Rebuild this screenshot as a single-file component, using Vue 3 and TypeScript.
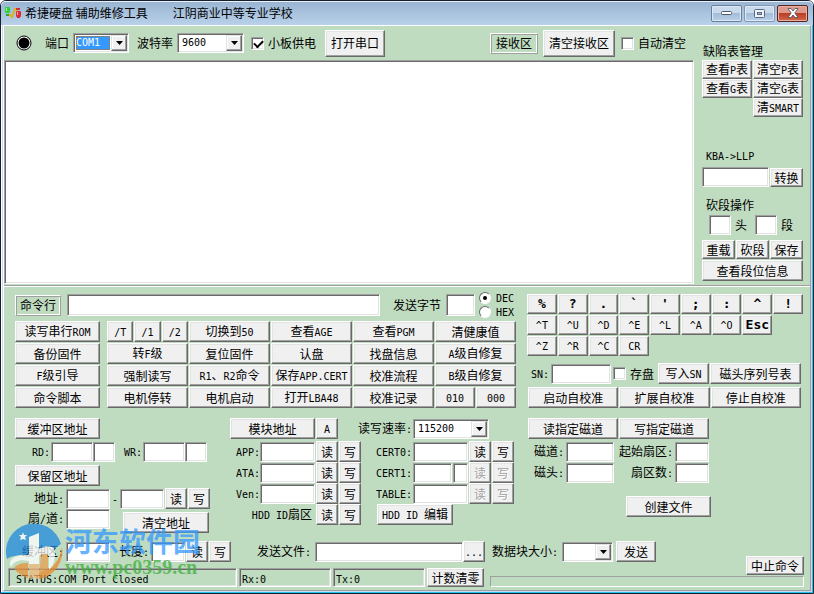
<script setup lang="ts">
import { h, reactive, ref } from 'vue'

// Text run helper: Latin characters are set in a narrow monospace face, half the width of a CJK glyph.
const T = (props: { s: string }) =>
  h('span', { class: 'txt' }, props.s.split(/([\x20-\x7e]+)/).filter(Boolean).map((part) =>
    /^[\x20-\x7e]/.test(part) ? h('span', { class: 'latin' }, part) : part
  ))
T.props = ['s']

const port = ref('COM1')
const baud = ref('9600')
const rate = ref('115200')
const blockSize = ref('')
const boardPower = ref(true)
const autoClear = ref(false)
const saveDisk = ref(false)
const numberBase = ref('DEC')
const received = ref('')

const f = reactive<Record<string, string>>({})

const commandRows: string[][] = [
  ['切换到50', '查看AGE', '查看PGM', '清健康值'],
  ['备份固件', '转F级', '复位固件', '认盘', '找盘信息', 'A级自修复'],
  ['F级引导', '强制读写', 'R1、R2命令', '保存APP.CERT', '校准流程', 'B级自修复'],
  ['命令脚本', '电机停转', '电机启动', '打开LBA48', '校准记录'],
]
const symbolKeys = ['%', '?', '.', '`', "'", ';', ':', '^', '!']
const controlKeys = ['^T', '^U', '^D', '^E', '^L', '^A', '^O']
const lastKeys = ['^Z', '^R', '^C', 'CR']
const modules = ['APP', 'ATA', 'Ven']
const certs = [
  { name: 'CERT0', split: false, off: false },
  { name: 'CERT1', split: true, off: true },
  { name: 'TABLE', split: false, off: true },
]
</script>

<template>
  <div class="window">
    <header class="titlebar">
      <svg class="app-icon" width="17" height="14" viewBox="0 0 17 14" aria-hidden="true">
        <path d="M4 8 L7 11 L10 3 L13 4" fill="none" stroke="#e0b020" stroke-width="2" />
        <rect x="0" y="1" width="5" height="6" rx="1" fill="#2fd23a" />
        <path d="M1 8h3v2H1z" fill="#2fa23a" />
        <rect x="11" y="5" width="5" height="6" rx="1" fill="#e02a34" />
        <path d="M11 2h4v2h-4zM12 11h3v1h-3z" fill="#c8323a" />
        <path d="M1 2h1v3H1zM12 6h1v3h-1z" fill="#fff" opacity=".6" />
      </svg>
      <h1>希捷硬盘 辅助维修工具</h1>
      <span class="school">江阴商业中等专业学校</span>
      <div class="caption">
        <button class="cap" aria-label="最小化">
          <svg width="12" height="5" viewBox="0 0 12 5"><rect x=".5" y=".5" width="10" height="3" rx="1" fill="#fff" stroke="#4d586b" /></svg>
        </button>
        <button class="cap dim" aria-label="最大化">
          <svg width="11" height="9" viewBox="0 0 11 9"><rect x=".5" y=".5" width="10" height="8" rx="1" fill="#eef3f9" stroke="#5a6880" /><rect x="3.5" y="3.5" width="4" height="2" fill="#9fb8d4" stroke="#5a6880" /></svg>
        </button>
        <button class="cap close" aria-label="关闭">
          <svg width="12" height="10" viewBox="0 0 12 10"><path d="M1 .5h3l2 2.500 2-2.500h3L7.800 5 11 9.500H8L6 7 4 9.500H1L4.200 5z" fill="#fff" stroke="#4a4a58" stroke-width=".8" /></svg>
        </button>
      </div>
    </header>

    <main class="client">
      <section class="upper">
        <div class="receive">
          <div class="toolbar">
            <svg class="lamp" width="17" height="17" viewBox="0 0 17 17" aria-hidden="true">
              <circle cx="8" cy="8" r="7" fill="#fff" stroke="#000" /><circle cx="8" cy="8" r="5.500" />
            </svg>
            <label for="port">端口</label>
            <span class="combo port">
              <select id="port" v-model="port"><option>COM1</option><option>COM2</option></select>
              <i><svg width="7" height="4" viewBox="0 0 7 4"><path d="M0 0h7L3.500 4z" /></svg></i>
            </span>
            <label for="baud">波特率</label>
            <span class="combo baud">
              <select id="baud" v-model="baud"><option>9600</option><option>115200</option></select>
              <i><svg width="7" height="4" viewBox="0 0 7 4"><path d="M0 0h7L3.500 4z" /></svg></i>
            </span>
            <label class="check power"><input v-model="boardPower" type="checkbox" />小板供电</label>
            <button class="tall">打开串口</button>
            <span class="plate area">接收区</span>
            <button class="tall">清空接收区</button>
            <label class="check"><input v-model="autoClear" type="checkbox" />自动清空</label>
          </div>
          <textarea v-model="received" aria-label="接收区"></textarea>
        </div>

        <aside class="side">
          <div class="side-title">缺陷表管理</div>
          <div class="defects">
            <button><T s="查看P表" /></button><button><T s="清空P表" /></button>
            <button><T s="查看G表" /></button><button><T s="清空G表" /></button>
            <button class="smart"><T s="清SMART" /></button>
          </div>
          <label class="side-label kba" for="kba"><T s="KBA->LLP" /></label>
          <div class="convert"><input id="kba" v-model="f.kba" type="text" /><button>转换</button></div>
          <div class="side-label cut">砍段操作</div>
          <div class="heads">
            <label><input v-model="f.head" type="text" />头</label>
            <label><input v-model="f.seg" type="text" />段</label>
          </div>
          <div class="triple"><button>重载</button><button>砍段</button><button>保存</button></div>
          <button class="info">查看段位信息</button>
        </aside>
      </section>

      <section class="lower">
        <div class="band">
          <div class="commands">
            <div class="cmdline">
              <label class="plate" for="cmd">命令行</label>
              <input id="cmd" v-model="f.cmd" class="grow" type="text" />
              <label class="send-label" for="byte">发送字节</label>
              <input id="byte" v-model="f.byte" class="byte" type="text" />
              <div class="bases">
                <label><input v-model="numberBase" type="radio" value="DEC" /><T s="DEC" /></label>
                <label><input v-model="numberBase" type="radio" value="HEX" /><T s="HEX" /></label>
              </div>
            </div>
            <div class="cmdgrid">
              <button class="first"><T s="读写串行ROM" /></button>
              <div class="thirds">
                <button v-for="k in ['/T', '/1', '/2']" :key="k"><T :s="k" /></button>
              </div>
              <template v-for="(row, r) in commandRows" :key="r">
                <button v-for="(c, i) in row" :key="c" :class="{ first: r > 0 && i === 0 }"><T :s="c" /></button>
              </template>
              <div class="halves"><button><T s="010" /></button><button><T s="000" /></button></div>
            </div>
          </div>

          <div class="right">
            <div class="keys">
              <button v-for="k in symbolKeys" :key="k" class="bold">{{ k }}</button>
              <button v-for="k in controlKeys" :key="k"><T :s="k" /></button>
              <button class="bold esc">Esc</button>
              <button v-for="(k, i) in lastKeys" :key="k" :class="{ wrap: i === 0 }"><T :s="k" /></button>
            </div>
            <div class="sn">
              <label for="sn"><T s="SN:" /></label>
              <input id="sn" v-model="f.sn" type="text" />
              <label class="check"><input v-model="saveDisk" type="checkbox" />存盘</label>
              <button><T s="写入SN" /></button>
              <button class="serial">磁头序列号表</button>
            </div>
            <div class="calib"><button>启动自校准</button><button>扩展自校准</button><button>停止自校准</button></div>
          </div>
        </div>

        <div class="band second">
          <div class="buffers">
            <button class="wide">缓冲区地址</button>
            <div class="row pairs">
              <label class="rd" for="rd"><T s="RD:" /></label>
              <input id="rd" v-model="f.rd" class="w42" type="text" /><input v-model="f.rd2" class="w22" type="text" aria-label="RD 2" />
              <label class="wr" for="wr"><T s="WR:" /></label>
              <input id="wr" v-model="f.wr" class="w42" type="text" /><input v-model="f.wr2" class="w22" type="text" aria-label="WR 2" />
            </div>
            <button class="wide keep">保留区地址</button>
            <div class="row addr">
              <label class="lead" for="from"><T s="地址:" /></label>
              <input id="from" v-model="f.from" class="w44" type="text" />
              <span class="dash"><T s="-" /></span>
              <input v-model="f.to" class="w44" type="text" aria-label="结束地址" />
              <button class="rw">读</button><button class="rw">写</button>
            </div>
            <div class="row sector">
              <label class="lead" for="sector"><T s="扇/道:" /></label>
              <input id="sector" v-model="f.sector" class="w44" type="text" />
              <button class="wipe">清空地址</button>
            </div>
          </div>

          <div class="modules">
            <div class="row head"><button class="wide">模块地址</button><button class="rw"><T s="A" /></button></div>
            <div v-for="m in modules" :key="m" class="row">
              <label :for="m"><T :s="m + ':'" /></label>
              <input :id="m" v-model="f[m]" class="w55" type="text" />
              <button class="rw">读</button><button class="rw">写</button>
            </div>
            <div class="row hdd"><T s="HDD ID扇区" /><button class="rw">读</button><button class="rw">写</button></div>
          </div>

          <div class="certs">
            <div class="row head">
              <label class="rate" for="rate"><T s="读写速率:" /></label>
              <span class="combo speed">
                <select id="rate" v-model="rate"><option>115200</option><option>9600</option></select>
                <i><svg width="7" height="4" viewBox="0 0 7 4"><path d="M0 0h7L3.500 4z" /></svg></i>
              </span>
            </div>
            <div v-for="c in certs" :key="c.name" class="row cert">
              <label :for="c.name"><T :s="c.name + ':'" /></label>
              <span class="fields">
                <input :id="c.name" v-model="f[c.name]" type="text" />
                <input v-if="c.split" v-model="f.extra" class="tiny" type="text" aria-label="CERT1 2" />
              </span>
              <button class="rw" :disabled="c.off">读</button><button class="rw" :disabled="c.off">写</button>
            </div>
            <button class="edit"><T s="HDD ID 编辑" /></button>
          </div>

          <div class="tracks">
            <div class="row head"><button>读指定磁道</button><button>写指定磁道</button></div>
            <div class="row">
              <label class="a" for="track"><T s="磁道:" /></label><input id="track" v-model="f.track" class="w48" type="text" />
              <label class="b" for="start"><T s="起始扇区:" /></label><input id="start" v-model="f.start" class="w34" type="text" />
            </div>
            <div class="row">
              <label class="a" for="hd"><T s="磁头:" /></label><input id="hd" v-model="f.hd" class="w48" type="text" />
              <label class="b" for="count"><T s="扇区数:" /></label><input id="count" v-model="f.count" class="w34" type="text" />
            </div>
            <button class="create">创建文件</button>
          </div>
        </div>

        <div class="transfer">
          <div class="row buffer">
            <label class="lead" for="buf"><T s="缓冲区:" /></label>
            <input id="buf" v-model="f.buf" class="w44" type="text" />
            <label class="len" for="len"><T s="长度:" /></label>
            <input id="len" v-model="f.len" class="w34" type="text" />
            <button class="rw">读</button><button class="rw">写</button>
          </div>
          <div class="row file">
            <label for="file"><T s="发送文件:" /></label>
            <input id="file" v-model="f.file" type="text" />
            <button class="rw browse" aria-label="浏览"><T s="..." /></button>
            <label for="block"><T s="数据块大小:" /></label>
            <span class="combo block">
              <select id="block" v-model="blockSize"><option value=""></option><option>512</option></select>
              <i><svg width="7" height="4" viewBox="0 0 7 4"><path d="M0 0h7L3.500 4z" /></svg></i>
            </span>
            <button class="go">发送</button>
          </div>
          <button class="abort">中止命令</button>
        </div>

        <footer class="status">
          <div class="pane message"><T s="STATUS:COM Port Closed" /></div>
          <div class="pane"><T s="Rx:0" /></div>
          <div class="pane"><T s="Tx:0" /></div>
          <button class="reset">计数清零</button>
          <div class="progress" role="progressbar" aria-valuenow="0"></div>
        </footer>
      </section>
    </main>

    <div class="watermark">
      <svg width="58" height="58" viewBox="0 0 58 58" aria-hidden="true">
        <path d="M2 37A28 28 0 0 1 56 22L49 27C45 24 39 25 33 29L20 33C12 33 6 34 2 37Z" fill="#1f88dc" />
        <path d="M57 25A28 28 0 0 1 34 57V50L47 45C53 39 56 32 57 25Z" fill="#e8892c" />
        <path d="M36 33C39 30 43 31 43 35V47L34 51Z" fill="#e8a050" />
        <path d="M9 46C12 42 17 41 23 41V56C17 54 12 51 9 46Z" fill="#e89038" />
        <path d="M24 15L34 11V27C41 23 50 23 50 31C50 38 48 44 44 48V35C43 31 38 31 34 34V57L24 56V39C15 37 9 39 6 45C2 38 10 32 24 33Z" fill="#fff" />
        <path d="M24 42H34V57L24 56Z" fill="#f0b878" />
        <path d="M18 10l1 3 3 0-2 2 1 3-3-1-3 1 1-3-2-2 3 0z" fill="#fff" />
      </svg>
      <div class="mark-text"><span class="mark-name">河东软件园</span><span class="mark-url">www.pc0359.cn</span></div>
    </div>
  </div>
</template>

<style>
body { margin: 0; }
</style>

<style scoped>
.window, .window * { box-sizing: border-box; }
.window {
  position: relative;
  display: flex;
  flex-direction: column;
  min-height: 100vh;
  padding: 0 2px 2px;
  border: 1px solid #16202c;
  border-radius: 6px 6px 0 0;
  background: #c6dcf2;
  box-shadow: inset -1px -1px #22c3f0, inset 1px 1px #fff;
  font: 12px/14px "Noto Sans CJK SC", sans-serif;
  color: #000;
  white-space: nowrap;
}
:deep(.txt) { white-space: pre; }
:deep(.latin) { font-family: "DejaVu Sans Mono", monospace; font-size: 10px; }

.titlebar {
  display: flex;
  align-items: center;
  height: 24px;
  margin: 0 -2px;
  padding: 0 5px 0 4px;
  border-radius: 5px 5px 0 0;
  background: linear-gradient(#99b4d1, #b9d1ea);
  box-shadow: inset 0 1px #e8f1fa;
}
.app-icon { margin-right: 3px; }
h1 { margin: 0; font-size: 12px; font-weight: 400; }
.school { margin-left: 25px; }
.caption { display: flex; gap: 2px; margin-left: auto; }

button {
  height: 21px;
  margin: 0;
  padding: 0;
  border: 1px solid;
  border-color: #fff #696969 #696969 #fff;
  background: #f0f0f0;
  box-shadow: inset -1px -1px #a0a0a0, inset 1px 1px #e3e3e3;
  font: inherit;
  color: #000;
  text-align: center;
  white-space: nowrap;
  flex: none;
}
button:disabled { color: #a0a0a0; text-shadow: 1px 1px #fff; }
.cap {
  display: flex;
  align-items: center;
  justify-content: center;
  width: 31px;
  height: 17px;
  border: 1px solid #6b7f99;
  border-radius: 2px;
  background: linear-gradient(#c9daec 45%, #a5bdd8 50%, #b9d0e8);
  box-shadow: inset 0 0 0 1px #dce9f6;
}
.cap.dim { border-color: #8397b3; }
.cap.close {
  border-color: #5b2320;
  background: linear-gradient(#dc9a8c 45%, #bd3c24 50%, #d0694a);
  box-shadow: inset 0 0 0 1px #e8b0a2;
}

input[type="text"], textarea {
  display: block;
  min-width: 0;
  height: 20px;
  margin: 0;
  padding: 1px 2px;
  border: 1px solid;
  border-color: #a0a0a0 #fff #fff #a0a0a0;
  border-radius: 0;
  outline: none;
  background: #fff;
  box-shadow: inset 1px 1px #696969, inset -1px -1px #e3e3e3;
  font: inherit;
  flex: none;
}
.combo {
  position: relative;
  display: flex;
  height: 20px;
  padding: 2px;
  border: 1px solid;
  border-color: #a0a0a0 #fff #fff #a0a0a0;
  background: #fff;
  box-shadow: inset 1px 1px #696969, inset -1px -1px #e3e3e3;
  flex: none;
}
.combo select {
  appearance: none;
  flex: 1;
  min-width: 0;
  margin: 0;
  padding: 0 2px;
  border: 0;
  border-radius: 0;
  outline: none;
  background: #fff;
  font: 10px/14px "DejaVu Sans Mono", monospace;
  color: #000;
}
.combo i {
  display: flex;
  align-items: center;
  justify-content: center;
  width: 16px;
  margin: -1px -1px -1px 0;
  border: 1px solid;
  border-color: #e3e3e3 #696969 #696969 #e3e3e3;
  background: #f0f0f0;
  box-shadow: inset -1px -1px #a0a0a0, inset 1px 1px #fff;
  pointer-events: none;
}
.combo.port select {
  margin-right: 1px;
  padding: 0;
  background: #3399ff;
  color: #fff;
  outline: 1px dotted #c66a10;
  outline-offset: -1px;
}
.port { width: 56px; margin: 0 8px 0 4px; }
.baud { width: 67px; margin: 0 7px 0 4px; }
.speed { width: 76px; }
.block { width: 51px; margin: 0 3px 0 4px; }

.check { display: flex; align-items: center; gap: 4px; }
input[type="checkbox"] {
  appearance: none;
  width: 13px;
  height: 13px;
  margin: 0;
  border: 1px solid;
  border-color: #a0a0a0 #fff #fff #a0a0a0;
  background: #fff;
  box-shadow: inset 1px 1px #696969, inset -1px -1px #e3e3e3;
}
input[type="checkbox"]:checked::after {
  content: "";
  display: block;
  width: 7px;
  height: 4px;
  margin: 2px 0 0 2px;
  border: solid #000;
  border-width: 0 0 2px 2px;
  transform: rotate(-45deg);
}
input[type="radio"] {
  appearance: none;
  display: flex;
  align-items: center;
  justify-content: center;
  width: 12px;
  height: 12px;
  margin: 0;
  border: 1px solid;
  border-color: #696969 #fff #fff #696969;
  border-radius: 50%;
  background: #fff;
}
input[type="radio"]:checked::after {
  content: "";
  width: 4px;
  height: 4px;
  border-radius: 50%;
  background: #000;
}
.plate {
  height: 21px;
  padding: 2px 4px;
  border: 1px solid;
  border-color: #fff #a0a0a0 #a0a0a0 #fff;
  box-shadow: inset 1px 1px #a0a0a0, inset -1px -1px #fff;
}

.client {
  display: flex;
  flex: 1;
  flex-direction: column;
  border: 1px solid;
  border-color: #fff #a0a0a0 #a0a0a0 #fff;
  background: #c0dcc0;
}
.upper { display: flex; flex: 1; border-bottom: 1px solid #a0a0a0; }
.receive { display: flex; flex: 1; flex-direction: column; padding-bottom: 1px; }
.toolbar { display: flex; align-items: center; height: 34px; padding: 0 8px 0 12px; }
.lamp { margin-right: 12px; }
.tall { height: 27px; padding: 0 5px; }
.power { margin-right: 9px; }
.toolbar .area { margin: 0 5px 0 auto; padding: 2px 5px; }
.area + .tall { margin-right: 6px; }
.receive textarea { flex: 1; width: 100%; height: auto; resize: none; }

.side { width: 101px; margin: 18px 7px 4px 8px; }
.side-title { margin-bottom: 2px; padding-left: 1px; }
.defects { display: grid; grid-template-columns: 1fr 1fr; gap: 0 1px; }
.defects button, .convert button, .triple button { height: 19px; }
.smart { grid-column: 2; }
.side-label { display: block; padding-left: 4px; }
.kba { margin: 31px 0 3px; }
.convert { display: flex; align-items: flex-end; gap: 1px; }
.convert input { flex: 1; }
.convert button { width: 33px; }
.cut { margin: 11px 0 3px; }
.heads { display: flex; gap: 8px; padding-left: 7px; }
.heads label { display: flex; align-items: center; gap: 4px; }
.heads input { width: 22px; }
.triple { display: grid; grid-template-columns: repeat(3, 1fr); gap: 1px; margin: 5px 0 1px; }
.info { width: 100%; }

.lower { padding: 7px 6px 3px 11px; border-top: 1px solid #fff; }
.band { display: flex; gap: 11px; }
.commands { flex: 1; min-width: 0; }
.cmdline { display: flex; align-items: center; height: 22px; margin-bottom: 5px; }
.cmdline .plate { margin-right: 6px; }
.cmdline input[type="text"] { height: 22px; }
.cmdline .grow { flex: 1; }
.send-label { margin: 0 5px 0 13px; }
.cmdline .byte { width: 29px; margin-right: 4px; }
.bases { width: 37px; }
.bases label { display: flex; align-items: center; gap: 5px; height: 14px; }
.cmdgrid { display: grid; grid-template-columns: 91px repeat(5, 1fr); gap: 1px; }
.first { width: 85px; }
.thirds, .halves { display: grid; grid-auto-flow: column; grid-auto-columns: 1fr; gap: 1px; }

.right { width: 276px; margin-right: 1px; }
.keys { display: grid; grid-template-columns: repeat(9, 1fr); gap: 1px; }
.keys button { height: 20px; }
.bold { font: bold 13px/14px "DejaVu Sans Mono", monospace; }
.wrap { grid-column: 1; }
.sn { display: flex; align-items: center; margin: 7px 0 3px; padding-left: 4px; }
.sn input[type="text"] { width: 60px; margin: 0 2px; }
.sn button { width: 51px; margin-left: 4px; }
.sn .serial { flex: 1; margin: 0 2px 0 1px; }
.calib { display: grid; grid-template-columns: repeat(3, 1fr); gap: 1px; margin: 0 2px 0 1px; }

.second { gap: 0; margin-top: 10px; min-height: 113px; }
.row { display: flex; align-items: center; height: 21px; }
.row.head { margin-bottom: 2px; }
.rw { width: 22px; margin-left: 1px; }
.w22 { width: 22px; }
.w34 { width: 34px; }
.w42 { width: 42px; }
.w44 { width: 44px; }
.w48 { width: 48px; }
.w55 { width: 55px; }
.wide { width: 85px; }
.lead { width: 49px; margin-right: 2px; text-align: right; }

.buffers { width: 215px; }
.buffers .wide { display: block; }
.pairs { margin: 2px 0 3px; }
.rd { width: 35px; margin-right: 1px; text-align: right; }
.wr { width: 27px; margin-right: 1px; text-align: right; }
.keep { margin-bottom: 2px; }
.dash { width: 10px; text-align: center; }
.sector { height: 22px; align-items: flex-start; }
.sector .lead { padding-top: 2px; }
.wipe { width: 86px; margin: 3px 0 0 13px; }

.modules { width: 131px; }
.modules label { width: 30px; text-align: right; }
.hdd { justify-content: flex-end; }
.hdd .rw:first-of-type { margin-left: 4px; }
.certs { flex: 1; min-width: 156px; }
.certs label { width: 51px; margin-right: 1px; text-align: right; }
.certs .rate { width: 55px; margin-left: -4px; }
.fields { display: flex; gap: 1px; width: 55px; }
.fields input { flex: 1; }
.fields .tiny { flex: none; width: 15px; }
.edit { width: 76px; margin-left: 16px; }
.tracks { width: 276px; }
.tracks .head { gap: 1px; }
.tracks .head button { width: 90px; }
.tracks .a { width: 36px; margin-right: 2px; text-align: right; }
.tracks .b { width: 59px; margin-right: 2px; text-align: right; }
.create { width: 85px; margin: 13px 0 0 98px; }

.transfer { display: flex; margin: 10px 0 6px; }
.buffer { margin-right: 26px; }
.len { width: 39px; margin-right: 2px; text-align: right; }
.file { flex: 1; max-width: 640px; }
.file input { flex: 1; margin-left: 4px; }
.browse { margin: 0 7px 0 0; }
.go { width: 40px; }
.abort { width: 58px; height: 19px; margin: 15px 0 -13px 90px; }

.status { display: flex; gap: 2px; height: 19px; margin-left: -7px; }
.pane {
  width: 92px;
  padding: 2px;
  border: 1px solid;
  border-color: #a0a0a0 #fff #fff #a0a0a0;
  box-shadow: inset 1px 1px #696969, inset -1px -1px #e3e3e3;
  flex: none;
}
.message { width: 229px; padding-left: 7px; }
.reset { width: 57px; height: 19px; }
.progress {
  flex: 1;
  height: 11px;
  margin: 8px 0 0 4px;
  border: 1px solid;
  border-color: #a0a0a0 #fff #fff #a0a0a0;
}

.watermark {
  position: absolute;
  left: 4px;
  bottom: 13px;
  display: flex;
  opacity: 0.75;
  pointer-events: none;
}
.mark-text { display: flex; flex-direction: column; padding: 4px 0 0 2px; }
.mark-name { font-size: 27px; font-weight: 700; line-height: 30px; color: #3399ff; }
.mark-url { font: bold 20px/22px "Liberation Serif", serif; color: #3fae3f; }
</style>
